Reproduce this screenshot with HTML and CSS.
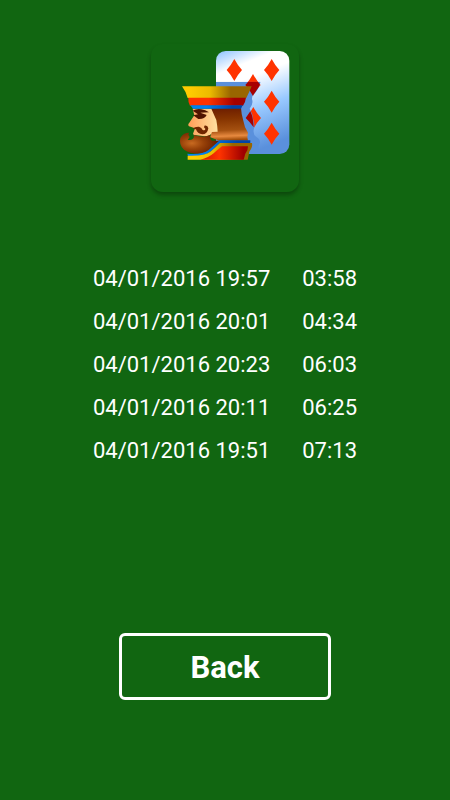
FILE: index.html
```
<!DOCTYPE html>
<html lang="en">
    <head>
        <meta charset="UTF-8" />
        <meta name="viewport" content="width=device-width, initial-scale=1.0" />
        <title>Best times</title>
        <link rel="stylesheet" href="styles.css">
    </head>
    <body>
        <main class="screen">
            <div class="logo">
                <svg viewBox="33 12 444 444" role="img" aria-label="Solitaire">
                    <defs>
                        <linearGradient id="card" gradientUnits="userSpaceOnUse" x1="235" y1="33" x2="355" y2="330">
                            <stop offset="0" stop-color="#90c4ff" />
                            <stop offset="0.2" stop-color="#ffffff" />
                            <stop offset="0.34" stop-color="#ffffff" />
                            <stop offset="0.64" stop-color="#99c9ff" />
                            <stop offset="1" stop-color="#5a90dc" />
                        </linearGradient>
                        <linearGradient id="gold">
                            <stop offset="0.1" stop-color="#ffcc00" />
                            <stop offset="0.4" stop-color="#ecbb00" />
                            <stop offset="0.7" stop-color="#996600" />
                        </linearGradient>
                        <linearGradient id="red">
                            <stop offset="0.35" stop-color="#ff3300" />
                            <stop offset="0.8" stop-color="#a40000" />
                        </linearGradient>
                        <linearGradient id="band">
                            <stop offset="0.3" stop-color="#0080f0" />
                            <stop offset="0.8" stop-color="#0044a8" />
                        </linearGradient>
                        <linearGradient id="hair" x1="0" y1="0" x2="0.05" y2="1">
                            <stop offset="0" stop-color="#6c1c00" />
                            <stop offset="0.35" stop-color="#863400" />
                            <stop offset="0.7" stop-color="#a45010" />
                            <stop offset="0.88" stop-color="#e88a40" />
                            <stop offset="1" stop-color="#a04c08" />
                        </linearGradient>
                        <radialGradient id="beard" cx="0.3" cy="0.5" r="0.6">
                            <stop offset="0" stop-color="#c86a20" />
                            <stop offset="0.5" stop-color="#964008" />
                            <stop offset="1" stop-color="#6c2200" />
                        </radialGradient>
                        <linearGradient id="skin">
                            <stop offset="0" stop-color="#ff9e58" />
                            <stop offset="1" stop-color="#ffe0a0" />
                        </linearGradient>
                        <linearGradient id="coat">
                            <stop offset="0.05" stop-color="#d81c00" />
                            <stop offset="0.4" stop-color="#ff3300" />
                            <stop offset="0.9" stop-color="#a00000" />
                        </linearGradient>
                        <path id="diamond" d="M0-33Q10-14 23 0Q10 14 0 33Q-10 14-23 0Q-10-14 0-33Z" />
                        <clipPath id="shade">
                            <path d="M228 125H362Q356 148 342 162Q335 168 336 178Q341 192 329 206Q338 220 340 240Q345 254 341 270Q339 285 350 292Q360 298 360 308Q353 318 357 330Q349 342 330 341H228Z" />
                        </clipPath>
                    </defs>

                    <!-- card -->
                    <rect x="228" y="33" width="220" height="309" rx="29" fill="url(#card)" />
                    <g fill="#ff3300">
                        <use href="#diamond" x="283" y="90" />
                        <use href="#diamond" x="395" y="90" />
                        <use href="#diamond" x="339" y="135" />
                        <use href="#diamond" x="395" y="185" />
                        <use href="#diamond" x="340" y="234" />
                        <use href="#diamond" x="395" y="281" />
                    </g>
                    <g clip-path="url(#shade)">
                        <rect x="228" y="120" width="140" height="222" fill="#5a90dc" />
                        <use href="#diamond" x="339" y="135" fill="#a80000" />
                    </g>
                    <path d="M317 234L331 214Q340 232 341 262Q330 246 317 234Z" fill="#a80000" />

                    <!-- hair and face -->
                    <path d="M214 204H303Q304 222 310 242Q313 262 324 278Q320 292 324 302H238L211 292L215 270Z" fill="url(#hair)" />
                    <path d="M158 206H214Q222 224 229 240Q232 256 233 275L216 276Q214 288 194 289L158 284L165 265L147 259Q142 254 148 248L163 226Z" fill="url(#skin)" />
                    <path d="M158 212Q171 205 184 208Q196 210 207 217Q191 217 181 218L200 225Q194 238 175 237Q166 231 160 226L174 223Z" fill="#501400" />
                    <path d="M157 266Q166 259 177 260Q185 263 188 270Q196 273 196 266Q190 263 193 257Q203 254 205 265Q202 283 187 283Q172 281 168 268Z" fill="#702600" />

                    <!-- beard -->
                    <path d="M211 285Q207 295 216 302H240V312Q220 338 190 340Q155 345 132 329Q116 315 121 294Q130 277 149 278Q162 282 161 294Q155 301 146 300Q156 293 147 290Q157 282 164 286Q182 291 197 289Z" fill="url(#beard)" />
                    <path d="M161 264Q148 273 145 285Q153 291 143 299Q158 302 162 291Q161 281 157 278Z" fill="#116611" />

                    <!-- crown -->
                    <path d="M126 139H335Q328 156 319 174H143Q138 155 126 139Z" fill="url(#gold)" />
                    <path d="M145 173H318Q317 184 309 197H150Q144 188 145 173Z" fill="url(#red)" />
                    <path d="M151 196H308L303 206H159Z" fill="url(#band)" />

                    <!-- coat -->
                    <path d="M142 341Q184 346 207 329Q226 313 239 301H331V310H242Q225 323 211 335Q194 350 144 348Z" fill="url(#band)" />
                    <path d="M143 347Q194 349 211 335Q225 324 240 309H336Q339 321 328 335L323 359H143Z" fill="url(#gold)" />
                    <path d="M181 359Q206 353 221 340Q234 328 246 319H324Q325 329 316 341L311 359Z" fill="url(#coat)" />
                </svg>
            </div>

            <table class="scores" aria-label="Best times">
                <tbody>
                    <tr><td>04/01/2016 19:57</td><td>03:58</td></tr>
                    <tr><td>04/01/2016 20:01</td><td>04:34</td></tr>
                    <tr><td>04/01/2016 20:23</td><td>06:03</td></tr>
                    <tr><td>04/01/2016 20:11</td><td>06:25</td></tr>
                    <tr><td>04/01/2016 19:51</td><td>07:13</td></tr>
                </tbody>
            </table>

            <button class="back" type="button" onclick="history.back()">Back</button>
        </main>
    </body>
</html>
```
FILE: styles.css
```
body {
    margin: 0;
    background-color: #116611;
    color: #fff;
    font-family: Roboto, sans-serif;
}
.screen {
    display: flex;
    flex-direction: column;
    align-items: center;
    padding: 44px 16px 100px;
}
.logo {
    width: 148px;
    border-radius: 12px;
    box-shadow: 0 3px 4px rgba(0, 0, 0, 0.3);
}
.logo svg {
    display: block;
    width: 100%;
}
.scores {
    margin-top: 65px;
    border-collapse: collapse;
    font-size: 22px;
    line-height: 43px;
}
.scores td {
    padding: 0;
    white-space: nowrap;
}
.scores td + td {
    padding-left: 32px;
}
.back {
    box-sizing: border-box;
    width: 212px;
    height: 67px;
    margin-top: 161px;
    padding: 2px 0 0;
    border: 3px solid #fff;
    border-radius: 6px;
    background: none;
    color: inherit;
    font-family: inherit;
    font-size: 31px;
    font-weight: bold;
    cursor: pointer;
}
.back:active {
    background-color: #0d520d;
}
```
